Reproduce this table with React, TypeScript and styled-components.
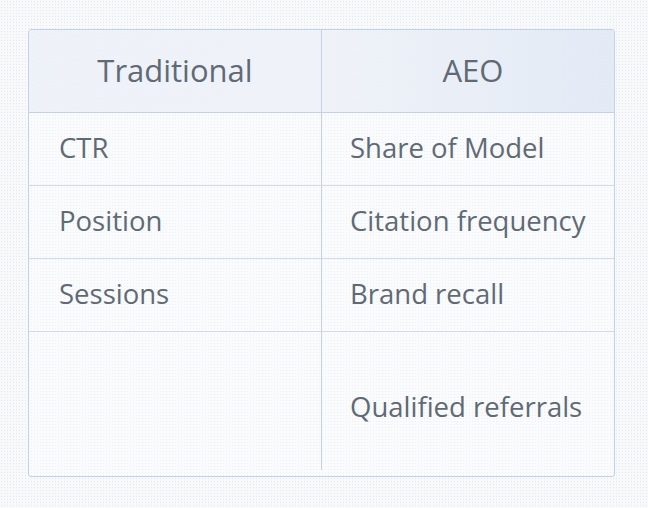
import styled, { createGlobalStyle } from 'styled-components';

const GlobalStyle = createGlobalStyle`
  html, body {
    margin: 0;
    padding: 0;
  }
  body {
    width: 648px;
    height: 508px;
    overflow: hidden;
    background-color: #f8f9fb;
    background-image: radial-gradient(#e3e7ee 0.8px, transparent 0.9px);
    background-size: 3px 3px;
    font-family: 'Open Sans', 'Liberation Sans', sans-serif;
  }
`;

const Page = styled.main`
  padding: 29px 0 0 28px;
`;

const Table = styled.div`
  width: 587px;
  height: 448px;
  box-sizing: border-box;
  border: 1px solid #c3d2e8;
  border-radius: 3px;
  overflow: hidden;
  display: grid;
  grid-template-columns: 293px 1fr;
  grid-template-rows: 83px 73px 73px 73px 1fr;
  background: rgba(255, 255, 255, 0.35);
`;

const HeadCell = styled.div<{ $first?: boolean }>`
  display: flex;
  align-items: center;
  justify-content: center;
  padding-left: ${(p) => (p.$first ? '0' : '10px')};
  padding-bottom: 2px;
  border-bottom: 1px solid #c3d2e8;
  border-right: ${(p) => (p.$first ? '1px solid #c3d2e8' : 'none')};
  background: ${(p) =>
    p.$first
      ? 'linear-gradient(90deg, rgba(236,241,248,0.85), rgba(238,242,248,0.9))'
      : 'linear-gradient(90deg, rgba(238,242,248,0.9), rgba(226,233,245,0.95))'};
  font-size: 31px;
  font-weight: 400;
  color: #5f6a76;
`;

const Cell = styled.div<{ $first?: boolean; $last?: boolean }>`
  display: flex;
  align-items: center;
  padding-left: ${(p) => (p.$first ? '30px' : '28px')};
  padding-bottom: 3px;
  box-sizing: border-box;
  border-bottom: ${(p) => (p.$last ? 'none' : '1px solid #cfdbec')};
  border-right: ${(p) => (p.$first ? '1px solid #c3d2e8' : 'none')};
  margin-bottom: ${(p) => (p.$first && p.$last ? '6px' : '0')};
  font-size: 27.5px;
  font-weight: 400;
  color: #5f6a76;
  padding-top: ${(p) => (p.$last ? '8px' : '0')};
`;

const rows: [string, string][] = [
  ['CTR', 'Share of Model'],
  ['Position', 'Citation frequency'],
  ['Sessions', 'Brand recall'],
  ['', 'Qualified referrals'],
];

export default function App() {
  return (
    <>
      <GlobalStyle />
      <Page>
        <Table>
          <HeadCell $first>Traditional</HeadCell>
          <HeadCell>AEO</HeadCell>
          {rows.map(([a, b], i) => {
            const last = i === rows.length - 1;
            return [
              <Cell key={`a${i}`} $first $last={last}>
                {a}
              </Cell>,
              <Cell key={`b${i}`} $last={last}>
                {b}
              </Cell>,
            ];
          })}
        </Table>
      </Page>
    </>
  );
}
